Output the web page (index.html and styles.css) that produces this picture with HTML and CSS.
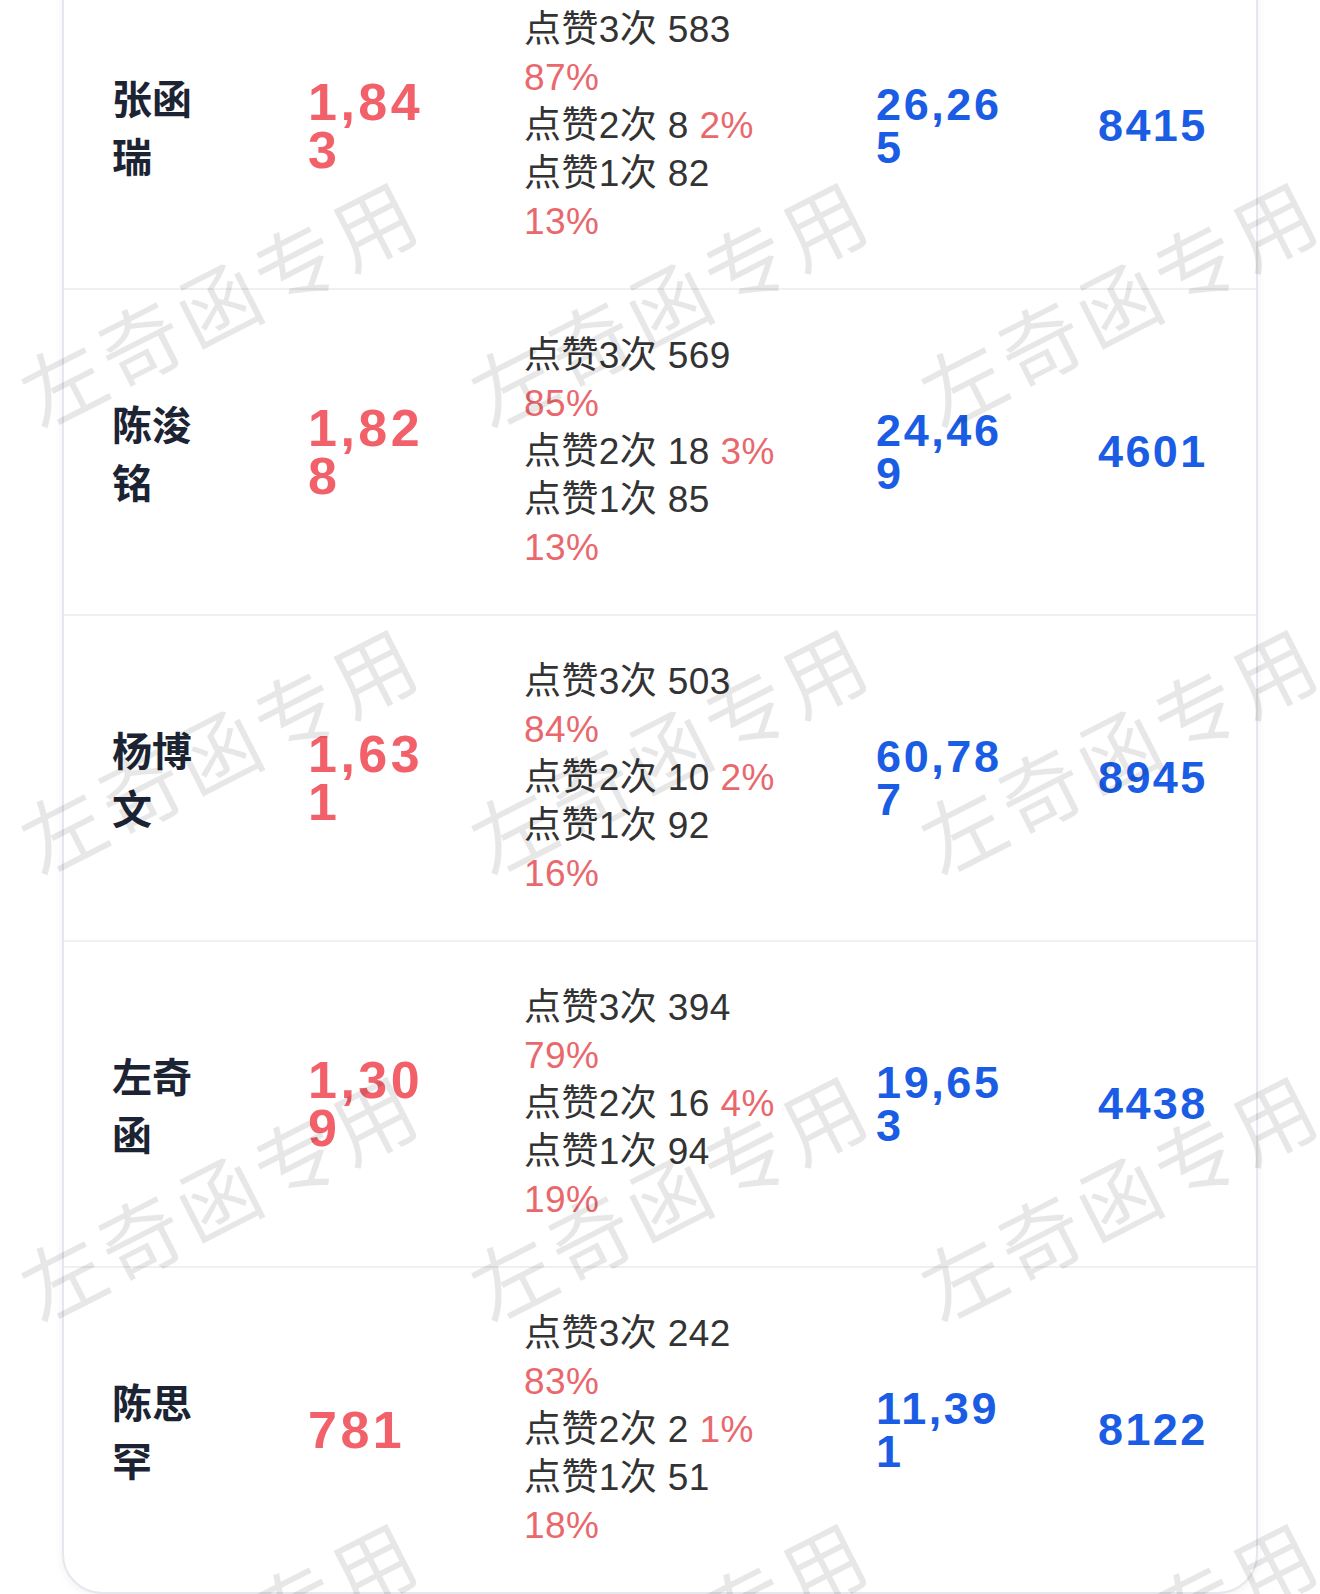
FILE: index.html
```html
<!DOCTYPE html>
<html lang="zh-CN">
<head>
  <meta charset="UTF-8" />
  <title>点赞统计</title>
  <meta name="viewport" content="width=device-width, initial-scale=1.0" />
  <link rel="stylesheet" href="styles.css">
</head>
<body>

  <!-- Ranking card -->
  <div class="board">
    <div class="row">
      <div class="name">张函瑞</div>
      <div class="count">1,843</div>
      <div class="detail">
        <div class="stat">点赞3次 583 <span class="pct">87%</span></div>
        <div class="stat">点赞2次 8 <span class="pct">2%</span></div>
        <div class="stat">点赞1次 82 <span class="pct">13%</span></div>
      </div>
      <div class="total">26,265</div>
      <div class="fans">8415</div>
    </div>

    <div class="row">
      <div class="name">陈浚铭</div>
      <div class="count">1,828</div>
      <div class="detail">
        <div class="stat">点赞3次 569 <span class="pct">85%</span></div>
        <div class="stat">点赞2次 18 <span class="pct">3%</span></div>
        <div class="stat">点赞1次 85 <span class="pct">13%</span></div>
      </div>
      <div class="total">24,469</div>
      <div class="fans">4601</div>
    </div>

    <div class="row">
      <div class="name">杨博文</div>
      <div class="count">1,631</div>
      <div class="detail">
        <div class="stat">点赞3次 503 <span class="pct">84%</span></div>
        <div class="stat">点赞2次 10 <span class="pct">2%</span></div>
        <div class="stat">点赞1次 92 <span class="pct">16%</span></div>
      </div>
      <div class="total">60,787</div>
      <div class="fans">8945</div>
    </div>

    <div class="row">
      <div class="name">左奇函</div>
      <div class="count">1,309</div>
      <div class="detail">
        <div class="stat">点赞3次 394 <span class="pct">79%</span></div>
        <div class="stat">点赞2次 16 <span class="pct">4%</span></div>
        <div class="stat">点赞1次 94 <span class="pct">19%</span></div>
      </div>
      <div class="total">19,653</div>
      <div class="fans">4438</div>
    </div>

    <div class="row">
      <div class="name">陈思罕</div>
      <div class="count">781</div>
      <div class="detail">
        <div class="stat">点赞3次 242 <span class="pct">83%</span></div>
        <div class="stat">点赞2次 2 <span class="pct">1%</span></div>
        <div class="stat">点赞1次 51 <span class="pct">18%</span></div>
      </div>
      <div class="total">11,391</div>
      <div class="fans">8122</div>
    </div>
  </div>

  <!-- Watermark layer -->
  <div class="watermarks">
    <div class="wm"><span>左奇函专用</span></div>
    <div class="wm"><span>左奇函专用</span></div>
    <div class="wm"><span>左奇函专用</span></div>
    <div class="wm"><span>左奇函专用</span></div>
    <div class="wm"><span>左奇函专用</span></div>
    <div class="wm"><span>左奇函专用</span></div>
    <div class="wm"><span>左奇函专用</span></div>
    <div class="wm"><span>左奇函专用</span></div>
    <div class="wm"><span>左奇函专用</span></div>
    <div class="wm"><span>左奇函专用</span></div>
    <div class="wm"><span>左奇函专用</span></div>
    <div class="wm"><span>左奇函专用</span></div>
  </div>

</body>
</html>
```

FILE: styles.css
```css
body {
  margin: 0;
  background-color: white;
  font-family: "Liberation Sans", "Noto Sans CJK SC", sans-serif;
}

/* Ranking card */
.board {
  margin: -38px 62px 0;
  background-color: white;
  border: 2px solid #e4e7ed;
  border-radius: 40px;
  box-shadow: 0 2px 10px rgba(0, 0, 0, 0.06);
}

.row {
  display: grid;
  grid-template-columns: 196px 216px 352px 222px 1fr;
  align-items: center;
  padding: 42px 0 42px 48px;
  border-bottom: 2px solid #eef0f3;
}

.row:last-child {
  border-bottom: none;
}

.name {
  width: 100px;
  font-family: "Noto Sans CJK SC", sans-serif;
  font-size: 40px;
  font-weight: bold;
  line-height: 58px;
  color: #1c2434;
}

.count {
  width: 124px;
  font-size: 52px;
  font-weight: bold;
  line-height: 48px;
  letter-spacing: 3.5px;
  color: #f2606a;
  word-break: break-all;
}

.detail {
  width: 262px;
  font-size: 37px;
  line-height: 48px;
  letter-spacing: 0.4px;
  color: #333;
}

.pct {
  color: #e9686d;
}

.total {
  width: 136px;
  font-size: 45px;
  font-weight: bold;
  line-height: 43px;
  letter-spacing: 2.6px;
  color: #1b5ce5;
  word-break: break-all;
}

.fans {
  font-size: 45px;
  font-weight: bold;
  letter-spacing: 2.4px;
  color: #1b5ce5;
}

/* Watermark layer */
.watermarks {
  position: fixed;
  top: 0;
  left: 0;
  right: 0;
  bottom: 0;
  overflow: hidden;
  pointer-events: none;
  display: grid;
  grid-template-columns: repeat(3, 450px);
  grid-auto-rows: 447px;
  padding: 76px 0 0 0;
  margin-left: -6px;
}

.wm {
  display: flex;
  align-items: center;
  justify-content: center;
}

.wm span {
  display: block;
  white-space: nowrap;
  font-family: "Noto Sans CJK SC", sans-serif;
  font-size: 82px;
  letter-spacing: 5px;
  color: rgba(0, 0, 0, 0.095);
  transform: rotate(-27deg);
}
```
